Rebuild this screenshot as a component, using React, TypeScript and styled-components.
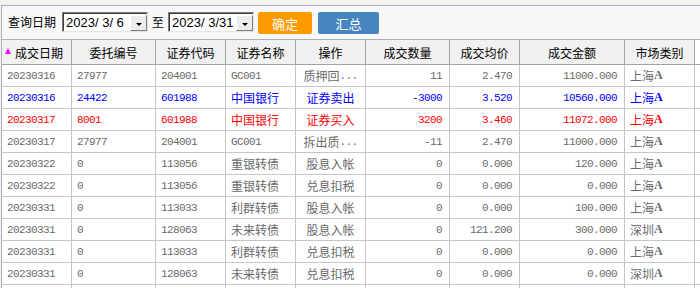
import React from 'react'
import styled, { createGlobalStyle } from 'styled-components'

type Tone = 'grey' | 'blue' | 'red'
type Align = 'left' | 'center' | 'right'

interface Trade {
  date: string
  order: string
  code: string
  name: string
  op: string
  qty: string
  price: string
  amount: string
  market: string
  tone: Tone
}

const trades: Trade[] = [
  { date: '20230316', order: '27977', code: '204001', name: 'GC001', op: '质押回...', qty: '11', price: '2.470', amount: '11000.000', market: '上海', tone: 'grey' },
  { date: '20230316', order: '24422', code: '601988', name: '中国银行', op: '证券卖出', qty: '-3000', price: '3.520', amount: '10560.000', market: '上海', tone: 'blue' },
  { date: '20230317', order: '8001', code: '601988', name: '中国银行', op: '证券买入', qty: '3200', price: '3.460', amount: '11072.000', market: '上海', tone: 'red' },
  { date: '20230317', order: '27977', code: '204001', name: 'GC001', op: '拆出质...', qty: '-11', price: '2.470', amount: '11000.000', market: '上海', tone: 'grey' },
  { date: '20230322', order: '0', code: '113056', name: '重银转债', op: '股息入帐', qty: '0', price: '0.000', amount: '120.000', market: '上海', tone: 'grey' },
  { date: '20230322', order: '0', code: '113056', name: '重银转债', op: '兑息扣税', qty: '0', price: '0.000', amount: '0.000', market: '上海', tone: 'grey' },
  { date: '20230331', order: '0', code: '113033', name: '利群转债', op: '股息入帐', qty: '0', price: '0.000', amount: '100.000', market: '上海', tone: 'grey' },
  { date: '20230331', order: '0', code: '128063', name: '未来转债', op: '股息入帐', qty: '0', price: '121.200', amount: '300.000', market: '深圳', tone: 'grey' },
  { date: '20230331', order: '0', code: '113033', name: '利群转债', op: '兑息扣税', qty: '0', price: '0.000', amount: '0.000', market: '上海', tone: 'grey' },
  { date: '20230331', order: '0', code: '128063', name: '未来转债', op: '兑息扣税', qty: '0', price: '0.000', amount: '0.000', market: '深圳', tone: 'grey' },
]

const headers = ['成交日期', '委托编号', '证券代码', '证券名称', '操作', '成交数量', '成交均价', '成交金额', '市场类别']

const toneColor: Record<Tone, string> = {
  grey: '#6a6a6a',
  blue: '#0000ff',
  red: '#ff0000',
}

// split ascii runs out so digits get the narrow mono face
const Mixed = ({ text }: { text: string }) => (
  <>
    {text
      .split(/([\x20-\x7e]+)/)
      .filter(Boolean)
      .map((part, i) =>
        /^[\x20-\x7e]+$/.test(part) ? <Mono key={i}>{part}</Mono> : <span key={i}>{part}</span>,
      )}
  </>
)

const App = () => {
  return (
    <Page>
      <GlobalStyle />
      <Panel>
        <Toolbar>
          <Label>查询日期</Label>
          <DateBox>
            <DateText>2023/ 3/ 6</DateText>
            <DropButton>
              <Arrow />
            </DropButton>
          </DateBox>
          <Label $narrow>至</Label>
          <DateBox>
            <DateText>2023/ 3/31</DateText>
            <DropButton>
              <Arrow />
            </DropButton>
          </DateBox>
          <ActionButton $color='#ff9b00' $width={54}>
            确定
          </ActionButton>
          <ActionButton $color='#4685bf' $width={61} $gap={6}>
            汇总
          </ActionButton>
        </Toolbar>

        <Grid>
          {headers.map((h, i) => (
            <HeadCell key={h} $sorted={i === 0}>
              {i === 0 && <SortMark />}
              {h}
            </HeadCell>
          ))}
          <HeadCell $filler />

          {trades.map((t, r) => {
            const cells: [string, Align][] = [
              [t.date, 'left'],
              [t.order, 'left'],
              [t.code, 'left'],
              [t.name, 'left'],
              [t.op, 'center'],
              [t.qty, 'right'],
              [t.price, 'right'],
              [t.amount, 'right'],
            ]
            return (
              <React.Fragment key={r}>
                {cells.map(([value, align], c) => (
                  <Cell key={c} $align={align} $tone={t.tone}>
                    <Mixed text={value} />
                  </Cell>
                ))}
                <Cell $align='left' $tone={t.tone}>
                  {t.market}
                  <MarketA>A</MarketA>
                </Cell>
                <Cell $align='left' $tone={t.tone} $filler />
              </React.Fragment>
            )
          })}

          {/* next row, scrolled below the fold */}
          {headers.map((h) => (
            <Cell key={'tail' + h} $align='left' $tone='grey' />
          ))}
          <Cell $align='left' $tone='grey' $filler />
        </Grid>
      </Panel>
    </Page>
  )
}

export default App

const GlobalStyle = createGlobalStyle`
  html, body {
    margin: 0;
    padding: 0;
    background: #f4f2ee;
  }
  body {
    width: 700px;
    height: 288px;
    overflow: hidden;
    font-family: "Noto Sans CJK SC", sans-serif;
  }
`

const Page = styled.div`
  width: 700px;
  height: 288px;
  overflow: hidden;
  padding: 5px 0 0 1px;
  box-sizing: border-box;
`

const Panel = styled.div`
  border-left: 1px solid #a9b0bc;
  background: #ffffff;
`

const Toolbar = styled.div`
  height: 35px;
  box-sizing: border-box;
  display: flex;
  align-items: flex-start;
  padding: 6px 0 0 6px;
  border-top: 1px solid #a9b0bc;
  border-bottom: 1px solid #a9b0bc;
  background: #f8f8f8;
`

const Label = styled.span<{ $narrow?: boolean }>`
  font-size: 12px;
  line-height: 20px;
  height: 20px;
  color: #000;
  margin: ${({ $narrow }) => ($narrow ? '0 4px' : '0 6px 0 0')};
`

const DateBox = styled.div`
  width: 86px;
  height: 20px;
  box-sizing: border-box;
  display: flex;
  align-items: center;
  background: #fff;
  border: 1px solid;
  border-color: #7c7c7c #e6e6e6 #e6e6e6 #7c7c7c;
  box-shadow: inset 1px 1px 0 #3c3c3c;
  padding: 0 0 0 3px;
`

const DateText = styled.span`
  font-family: 'Liberation Sans', Arial, sans-serif;
  font-size: 13px;
  color: #000;
  white-space: pre;
  padding-top: 1px;
`

const DropButton = styled.div`
  margin-left: auto;
  width: 17px;
  height: 16px;
  box-sizing: border-box;
  display: flex;
  justify-content: center;
  align-items: flex-end;
  padding-bottom: 4px;
  background: #ececec;
  border: 1px solid;
  border-color: #ffffff #7e7e7e #7e7e7e #ffffff;
  margin-top: 1px;
`

const Arrow = styled.span`
  width: 0;
  height: 0;
  border-left: 3px solid transparent;
  border-right: 3px solid transparent;
  border-top: 3px solid #000;
`

const ActionButton = styled.div<{ $color: string; $width: number; $gap?: number }>`
  width: ${({ $width }) => $width}px;
  height: 22px;
  margin-left: ${({ $gap }) => $gap ?? 4}px;
  box-sizing: border-box;
  display: flex;
  align-items: center;
  justify-content: center;
  background: ${({ $color }) => $color};
  border-radius: 2px;
  color: #fff;
  font-size: 13px;
`

const Grid = styled.div`
  display: grid;
  grid-template-columns: 70px 84px 70px 70px 70px 84px 70px 105px 70px 1fr;
  background: #fff;
`

const HeadCell = styled.div<{ $sorted?: boolean; $filler?: boolean }>`
  height: 25px;
  box-sizing: border-box;
  display: flex;
  align-items: center;
  justify-content: ${({ $sorted }) => ($sorted ? 'flex-start' : 'center')};
  padding-left: ${({ $sorted }) => ($sorted ? '3px' : '0')};
  background: ${({ $filler }) => ($filler ? '#ffffff' : '#f1f1f1')};
  border-right: ${({ $filler }) => ($filler ? 'none' : '1px solid #a3a3a3')};
  border-bottom: 1px solid #a3a3a3;
  font-size: 12px;
  color: #000;
  white-space: nowrap;
`

const SortMark = styled.span`
  width: 0;
  height: 0;
  border-left: 3.5px solid transparent;
  border-right: 3.5px solid transparent;
  border-bottom: 6px solid #ff00ff;
  margin: 0 4px 2px 0;
`

const Cell = styled.div<{ $align: Align; $tone: Tone; $filler?: boolean }>`
  height: 22px;
  box-sizing: border-box;
  display: flex;
  align-items: center;
  justify-content: ${({ $align }) =>
    $align === 'right' ? 'flex-end' : $align === 'center' ? 'center' : 'flex-start'};
  padding: ${({ $align }) => ($align === 'right' ? '0 7px 0 0' : $align === 'center' ? '0' : '0 0 0 5px')};
  border-right: ${({ $filler }) => ($filler ? 'none' : '1px solid #c6c6c6')};
  border-bottom: 1px solid #c6c6c6;
  color: ${({ $tone }) => toneColor[$tone]};
  font-size: 12px;
  white-space: nowrap;
  overflow: hidden;
`

const Mono = styled.span`
  font-family: 'Liberation Mono', 'DejaVu Sans Mono', monospace;
  font-size: 11px;
  letter-spacing: -0.6px;
`

const MarketA = styled.span`
  font-family: 'Liberation Serif', serif;
  font-weight: bold;
  font-size: 12px;
`
